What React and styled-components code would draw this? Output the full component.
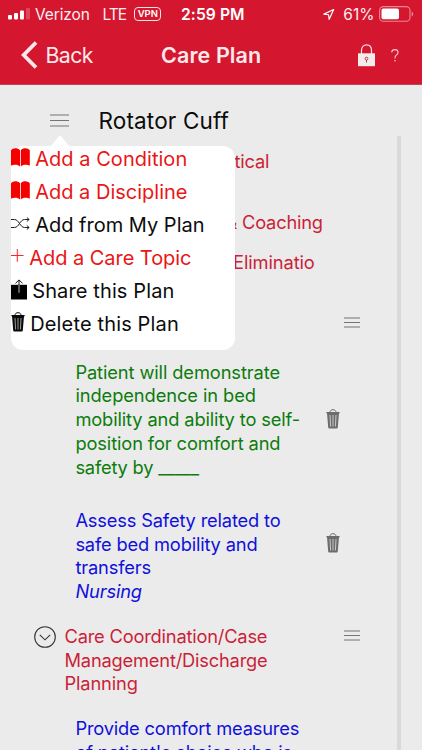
import React from "react";
import styled, { createGlobalStyle } from "styled-components";

const GlobalStyle = createGlobalStyle`
  * {
    box-sizing: border-box;
  }
  body {
    margin: 0;
    background: #ebebeb;
    font-family: Inter, "Liberation Sans", sans-serif;
  }
`;

const menuItems = [
  { icon: "book", label: "Add a Condition", red: true, ls: 0.04 },
  { icon: "book", label: "Add a Discipline", red: true, ls: 0 },
  { icon: "shuffle", label: "Add from My Plan", ls: 0 },
  { icon: "plus", label: "Add a Care Topic", red: true, ls: -0.04 },
  { icon: "share", label: "Share this Plan", ls: 0.12 },
  { icon: "trash", label: "Delete this Plan", ls: 0.15 },
];

const goalLines = [
  { text: "Patient will demonstrate", ls: -0.11 },
  { text: "independence in bed", ls: -0.08 },
  { text: "mobility and ability to self-", ls: -0.13 },
  { text: "position for comfort and", ls: -0.12 },
  { text: "safety by _____", ls: -0.2 },
];

const safetyLines = [
  { text: "Assess Safety related to", ls: -0.17 },
  { text: "safe bed mobility and", ls: -0.17 },
  { text: "transfers", ls: -0.15 },
  { text: "Nursing", ls: -0.15, italic: true },
];

const topicLines = [
  { text: "Care Coordination/Case", ls: -0.2 },
  { text: "Management/Discharge", ls: -0.2 },
  { text: "Planning", ls: -0.15 },
];

const comfortLines = [
  { text: "Provide comfort measures", ls: -0.17 },
  { text: "of patient's choice who is", ls: -0.19 },
];

const TrashIcon = ({ color, lines, width = 14, height = 20 }) => (
  <svg width={width} height={height} viewBox="0 0 14 20">
    <path d="M4 3.4C4 1.6 5.2.7 7 .7s3 .9 3 2.7" fill="none" stroke={color} strokeWidth="1" />
    <path d="M.4 3h13.2v1.3H.4z" fill={color} />
    <path d="M1 4.1h12l-1.2 14.2c-.1.8-.5 1.3-1.3 1.3h-7c-.8 0-1.2-.5-1.3-1.3z" fill={color} />
    <path d="M4 6l.6 11.5M7 6v11.5M10 6l-.6 11.5" stroke={lines} strokeWidth=".9" />
  </svg>
);

const BurgerIcon = ({ width, height, color = "#747474" }) => (
  <svg width={width} height={height} viewBox={`0 0 ${width} ${height}`}>
    <path
      d={`M0 1h${width}M0 ${height / 2}h${width}M0 ${height - 1}h${width}`}
      stroke={color}
      strokeWidth="1.2"
    />
  </svg>
);

const MenuIcon = ({ name }) => {
  if (name === "book") {
    return (
      <svg width="19" height="19" viewBox="0 0 19 19">
        <path
          d="M9 2.3C7.8.8 6 .3 4.4.3 2.5.3 1 1 0 2.3v15.4c1.2-.7 2.8-1 4.4-1 1.8 0 3.4.5 4.6 1.7zM9.8 2.3C11 .8 12.6.3 14.3.3c2 0 3.5.7 4.5 2v15.4c-1.2-.7-2.9-1-4.5-1-1.8 0-3.3.5-4.5 1.7z"
          fill="#f50000"
        />
      </svg>
    );
  }
  if (name === "shuffle") {
    return (
      <svg width="19" height="13" viewBox="0 0 19 13" fill="none" stroke="#222" strokeWidth="1">
        <path d="M0 2.5h3.5c4.5 0 5.5 8 10 8h4.5M0 10.5h3.5c4.5 0 5.5-8 10-8h4.5" />
        <path d="M15.8.5l2.4 2-2.4 2M15.8 8.5l2.4 2-2.4 2" />
      </svg>
    );
  }
  if (name === "plus") {
    return (
      <svg width="13" height="13" viewBox="0 0 13 13">
        <path d="M0 6.5h12.5M6.3 0v12.8" stroke="#f22" strokeWidth="1" />
      </svg>
    );
  }
  if (name === "share") {
    return (
      <svg width="16" height="21" viewBox="0 0 16 21">
        <path d="M0 5.8h16v14.7H0z" fill="#000" />
        <path d="M8 5.8v8" stroke="#bbb" strokeWidth="1" />
        <path d="M8 6V1M4.5 4.3L8 .9l3.5 3.4" fill="none" stroke="#111" strokeWidth="1" />
      </svg>
    );
  }
  return <TrashIcon color="#0a0a0a" lines="#aaa" />;
};

const TextBlock = ({ lines, color }) => (
  <Paragraph $color={color}>
    {lines.map((line) => (
      <Line key={line.text} $ls={line.ls} $italic={line.italic}>
        {line.text}
      </Line>
    ))}
  </Paragraph>
);

const StatusBar = () => (
  <Status>
    <Carrier>
      <svg width="22" height="12" viewBox="0 0 22 12">
        <rect x="0" y="7" width="4" height="4.5" rx="1" fill="#fff" />
        <rect x="6" y="5" width="4" height="6.5" rx="1" fill="#fff" />
        <rect x="12" y="2.5" width="4" height="9" rx="1" fill="#fff" />
        <rect x="18" y="0" width="4" height="11.5" rx="1" fill="#e0475d" />
      </svg>
      <StatusText $left={5} $ls={-0.1}>Verizon</StatusText>
      <StatusText $left={12.5} $ls={-0.9}>LTE</StatusText>
      <Vpn>VPN</Vpn>
    </Carrier>
    <Clock>2:59 PM</Clock>
    <Power>
      <svg width="13" height="13" viewBox="0 0 13 13">
        <path d="M11.7 1L1 6.1l5 .7.8 5z" fill="none" stroke="#fff" strokeWidth="1.3" strokeLinejoin="round" />
      </svg>
      <StatusText $left={8.5} $ls={0}>61%</StatusText>
      <Battery width="35" height="16" viewBox="0 0 35 16">
        <rect x=".6" y=".6" width="30.4" height="14.6" rx="3.8" fill="none" stroke="#ea8795" strokeWidth="1.1" />
        <rect x="2.5" y="2.6" width="17.5" height="10.6" rx="1.8" fill="#fff" />
        <path d="M32.6 5.4c2.2.8 2.2 4.2 0 5z" fill="#ea8795" />
      </Battery>
    </Power>
  </Status>
);

const NavBar = () => (
  <Nav>
    <BackButton>
      <svg width="17" height="28" viewBox="0 0 17 28">
        <path d="M15 1.5L2.7 14 15 26.5" fill="none" stroke="#fbe9ec" strokeWidth="3.8" />
      </svg>
      <BackLabel>Back</BackLabel>
    </BackButton>
    <NavTitle>Care Plan</NavTitle>
    <NavActions>
      <svg width="17" height="23" viewBox="0 0 17 23">
        <path d="M3.5 10V6.2C3.5 3 5.5.8 8.5.8s5 2.2 5 5.4V10" fill="none" stroke="#f9dfe3" strokeWidth="1.2" />
        <path d="M0 9.3h17v12.9H0z" fill="#f4ebec" />
        <circle cx="8.5" cy="14.6" r="1.4" fill="none" stroke="#b0283b" strokeWidth=".9" />
        <path d="M8.5 16v2.5" stroke="#b0283b" strokeWidth=".9" />
      </svg>
      <svg width="8" height="13" viewBox="0 0 8 13">
        <path d="M.7 3.4C.8 1.6 2 .6 3.8.6S7 1.7 7 3.4C7 5.8 4 5.9 4 8.6v.8" fill="none" stroke="#f5ccd2" strokeWidth="1.1" />
        <circle cx="4" cy="11.8" r=".8" fill="#f5ccd2" />
      </svg>
    </NavActions>
  </Nav>
);

const PlanMenu = () => (
  <Popover>
    <PopoverArrow width="28" height="12" viewBox="0 0 28 12">
      <path d="M0 12c3 0 4.5-.8 6.5-2.8L12 2.3c1.4-1.6 2.6-1.6 4 0l5.5 6.9C23.5 11.2 25 12 28 12z" fill="#fff" />
    </PopoverArrow>
    <MenuList>
      {menuItems.map((item) => (
        <MenuRow key={item.label} $red={item.red}>
          <IconSlot $icon={item.icon}>
            <MenuIcon name={item.icon} />
          </IconSlot>
          <MenuLabel $ls={item.ls}>{item.label}</MenuLabel>
        </MenuRow>
      ))}
    </MenuList>
  </Popover>
);

const App = () => {
  return (
    <Screen>
      <GlobalStyle />
      <Header>
        <StatusBar />
        <NavBar />
      </Header>
      <Content>
        <TitleRow>
          <BurgerIcon width={19} height={13} />
          <PlanTitle>Rotator Cuff</PlanTitle>
        </TitleRow>
        <Body>
          <Topics>
            <CoveredTopic $height={61.3} $left={234.5}><Line $ls={-0.18}>tical</Line></CoveredTopic>
            <CoveredTopic $height={39.7} $left={225.5}><Line $ls={-0.2}>&amp; Coaching</Line></CoveredTopic>
            <CoveredTopic $height={56.6} $left={233}><Line $ls={-0.1}>Eliminatio</Line></CoveredTopic>
            <BurgerRow>
              <BurgerIcon width={16} height={11} />
            </BurgerRow>
            <Entry $gap={29.2}>
              <TextBlock lines={goalLines} color="#0c7c0c" />
              <EntryAction $up={2}>
                <TrashIcon color="#6c6c6c" lines="#d4d4d4" />
              </EntryAction>
            </Entry>
            <Entry $gap={20.8}>
              <TextBlock lines={safetyLines} color="#1010dc" />
              <EntryAction $up={27}>
                <TrashIcon color="#6c6c6c" lines="#d4d4d4" />
              </EntryAction>
            </Entry>
            <TopicRow>
              <svg width="22" height="22" viewBox="0 0 22 22" fill="none" stroke="#333" strokeWidth="1.1">
                <circle cx="11" cy="11" r="10.3" />
                <path d="M5.8 8.8l5.2 5 5.2-5" />
              </svg>
              <TextBlock lines={topicLines} color="#cb1f38" />
              <BurgerIcon width={16} height={11} />
            </TopicRow>
            <Entry $gap={0}>
              <TextBlock lines={comfortLines} color="#1010dc" />
            </Entry>
          </Topics>
          <ScrollTrack />
        </Body>
        <PlanMenu />
      </Content>
    </Screen>
  );
};

export default App;

const Screen = styled.div`
  width: 422px;
  height: 750px;
  display: flex;
  flex-direction: column;
  overflow: hidden;
  background: #ebebeb;
`;

const Header = styled.header`
  height: 84.5px;
  flex: none;
  background: #d4162f;
  border-bottom: 1px solid #b8485a;
  color: #fff;
`;

const Status = styled.div`
  height: 28px;
  padding: 0 8px;
  display: grid;
  grid-template-columns: 173px 1fr 91px;
  align-items: center;
`;

const Carrier = styled.div`
  display: flex;
  align-items: center;
`;

const StatusText = styled.span`
  margin-left: ${(p) => p.$left}px;
  font-size: 15.5px;
  letter-spacing: ${(p) => p.$ls}px;
  color: #fdeef0;
`;

const Vpn = styled.span`
  width: 27px;
  height: 14px;
  margin-left: 8px;
  border: 1px solid #fbe3e6;
  border-radius: 4px;
  font-size: 9.5px;
  font-weight: 600;
  line-height: 12px;
  text-align: center;
`;

const Clock = styled.span`
  font-size: 15.7px;
  font-weight: 600;
  letter-spacing: 0.05px;
  white-space: nowrap;
`;

const Power = styled.div`
  display: flex;
  align-items: center;
`;

const Battery = styled.svg`
  margin-left: 4.5px;
  flex: none;
`;

const Nav = styled.nav`
  height: 54px;
  padding: 0 23px 0 21px;
  display: grid;
  grid-template-columns: 140px 1fr 41px;
  align-items: center;
`;

const BackButton = styled.div`
  display: flex;
  align-items: center;
  gap: 7.5px;
`;

const BackLabel = styled.span`
  font-size: 21.3px;
  letter-spacing: -0.6px;
  color: #fbe9ec;
`;

const NavTitle = styled.h1`
  margin: 0;
  font-size: 21.5px;
  font-weight: 600;
  letter-spacing: 0.1px;
  color: #fbe9ec;
`;

const NavActions = styled.div`
  display: flex;
  align-items: center;
  justify-content: space-between;
`;

const Content = styled.main`
  position: relative;
  flex: 1;
  min-height: 0;
`;

const TitleRow = styled.div`
  height: 51.5px;
  padding: 20px 0 0 50px;
  display: flex;
  align-items: center;
  gap: 29.5px;
`;

const PlanTitle = styled.h2`
  margin: 1px 0 0;
  font-size: 22.5px;
  font-weight: 400;
  letter-spacing: 0.15px;
  color: #0c0c0c;
`;

const Body = styled.div`
  display: flex;
  height: 614px;
`;

const Topics = styled.div`
  flex: 0 0 397px;
  padding-top: 14px;
`;

const ScrollTrack = styled.div`
  width: 4px;
  background: #d9d9d9;
`;

const Paragraph = styled.div`
  width: 250.3px;
  color: ${(p) => p.$color};
`;

const Line = styled.span`
  display: block;
  font-size: 18.3px;
  line-height: 23.8px;
  letter-spacing: ${(p) => p.$ls}px;
  font-style: ${(p) => (p.$italic ? "italic" : "normal")};
  white-space: nowrap;
`;

const CoveredTopic = styled.div`
  height: ${(p) => p.$height}px;
  padding-left: ${(p) => p.$left}px;
  color: #cb1f38;
`;

const BurgerRow = styled.div`
  height: 53px;
  padding: 4.5px 0 0 344px;
`;

const Entry = styled.div`
  display: flex;
  align-items: center;
  padding-left: 75.4px;
  margin-bottom: ${(p) => p.$gap}px;
`;

const EntryAction = styled.div`
  display: flex;
  padding-bottom: ${(p) => p.$up}px;
`;

const TopicRow = styled.div`
  display: flex;
  align-items: flex-start;
  padding-left: 34px;
  margin-bottom: 20.6px;

  > svg:first-child {
    margin: 1.5px 8.5px 0 0;
  }
  > svg:last-child {
    margin: 5px 0 0 29px;
  }
`;

const Popover = styled.div`
  position: absolute;
  top: 61px;
  left: 11px;
  width: 224px;
  height: 204px;
  border-radius: 12px;
  background: #fff;
`;

const PopoverArrow = styled.svg`
  position: absolute;
  top: -11px;
  left: 35px;
`;

const MenuList = styled.div`
  margin-top: -3px;
`;

const MenuRow = styled.div`
  height: 33px;
  display: flex;
  align-items: center;
  gap: 5.2px;
  color: ${(p) => (p.$red ? "#ea1515" : "#0c0c0c")};
`;

const iconLift = { book: 4, shuffle: 4, plus: 5, share: 4, trash: 4 };

const IconSlot = styled.span`
  display: flex;
  padding-bottom: ${(p) => iconLift[p.$icon]}px;
`;

const MenuLabel = styled.span`
  font-size: 20px;
  letter-spacing: ${(p) => p.$ls}px;
  white-space: nowrap;
`;
